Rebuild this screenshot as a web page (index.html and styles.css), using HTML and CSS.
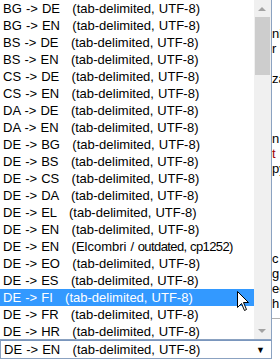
FILE: index.html
```html
<!DOCTYPE html>
<html lang="en">
<head>
    <meta charset="UTF-8">
    <meta name="viewport" content="width=device-width, initial-scale=1.0">
    <title>Dictionary download</title>
    <link rel="stylesheet" href="styles.css">
</head>
<body>
    <div class="page">
        <div class="page-text">
            <div class="line">ni</div>
            <div class="line">r</div>
            <div class="line"></div>
            <div class="line">za</div>
            <div class="line"></div>
            <div class="line"></div>
            <div class="line"></div>
            <div class="line">n</div>
            <div class="line"><span class="link">t</span></div>
            <div class="line">py</div>
            <div class="line"></div>
            <div class="line"></div>
            <div class="line"></div>
            <div class="line"></div>
            <div class="line"></div>
            <div class="line">c</div>
            <div class="line">g</div>
            <div class="line">ed</div>
            <div class="line">h</div>
            <div class="rule"></div>
        </div>
        <div class="select">
            <span class="select-text">DE -&gt; EN   (tab-delimited, UTF-8)</span>
            <span class="select-arrow">&#9660;</span>
        </div>
    </div>

    <div class="popup">
        <ul class="options">
            <li>BG -&gt; DE   (tab-delimited, UTF-8)</li>
            <li>BG -&gt; EN   (tab-delimited, UTF-8)</li>
            <li>BS -&gt; DE   (tab-delimited, UTF-8)</li>
            <li>BS -&gt; EN   (tab-delimited, UTF-8)</li>
            <li>CS -&gt; DE   (tab-delimited, UTF-8)</li>
            <li>CS -&gt; EN   (tab-delimited, UTF-8)</li>
            <li>DA -&gt; DE   (tab-delimited, UTF-8)</li>
            <li>DA -&gt; EN   (tab-delimited, UTF-8)</li>
            <li>DE -&gt; BG   (tab-delimited, UTF-8)</li>
            <li>DE -&gt; BS   (tab-delimited, UTF-8)</li>
            <li>DE -&gt; CS   (tab-delimited, UTF-8)</li>
            <li>DE -&gt; DA   (tab-delimited, UTF-8)</li>
            <li>DE -&gt; EL   (tab-delimited, UTF-8)</li>
            <li>DE -&gt; EN   (tab-delimited, UTF-8)</li>
            <li>DE -&gt; EN   (Elcombri /<span class="tight"> outdated, cp1252)</span></li>
            <li>DE -&gt; EO   (tab-delimited, UTF-8)</li>
            <li>DE -&gt; ES   (tab-delimited, UTF-8)</li>
            <li class="selected">DE -&gt; FI   (tab-delimited, UTF-8)</li>
            <li>DE -&gt; FR   (tab-delimited, UTF-8)</li>
            <li>DE -&gt; HR   (tab-delimited, UTF-8)</li>
        </ul>
        <div class="scrollbar">
            <div class="arrow-up"></div>
            <div class="thumb"></div>
            <div class="track"></div>
            <div class="arrow-down"></div>
        </div>
    </div>

    <svg class="cursor" width="13" height="21" viewBox="0 0 13 21">
        <path d="M0.5 0.5 L0.5 16.5 L4.5 12.5 L7.5 19.5 L9.5 18.5 L6.5 11.5 L11.5 11.5 Z" fill="#fff" stroke="#000" stroke-width="1"/>
    </svg>
</body>
</html>
```

FILE: styles.css
```css
body {
    margin: 0;
    width: 280px;
    height: 362px;
    overflow: hidden;
    background: #fff;
    font-family: "Liberation Sans", Arial, sans-serif;
    font-size: 13px;
    color: #000;
    position: relative;
}
.page {
    display: flex;
    flex-direction: column;
    height: 362px;
}
.page-text {
    height: 340px;
    padding: 26px 0 0 272px;
    box-sizing: border-box;
}
.line {
    height: 15px;
    line-height: 15px;
    white-space: pre;
}
.link {
    color: #a00000;
}
.rule {
    margin-top: 7px;
    border-top: 1px solid #b0b0b0;
}
.select {
    width: 272px;
    height: 19px;
    box-sizing: border-box;
    border: 1px solid #8ba2c1;
    border-top-color: #7a96bd;
    display: flex;
    align-items: center;
    justify-content: space-between;
    padding: 0 6px 0 3px;
}
.select-text {
    white-space: pre;
    word-spacing: 0.5px;
}
.select-arrow {
    font-size: 9px;
}
.popup {
    position: absolute;
    top: 0;
    left: 0;
    width: 272px;
    height: 340px;
    box-sizing: border-box;
    background: #fff;
    border-right: 1px solid #8ba2c1;
    border-bottom: 1px solid #8ba2c1;
    display: flex;
}
.options {
    list-style: none;
    margin: 0;
    padding: 0;
    flex: 1;
}
.options li {
    height: 17px;
    line-height: 17px;
    padding-left: 3px;
    white-space: pre;
    word-spacing: 0.5px;
}
.options li.selected {
    background: #3399ff;
    color: #fff;
}
.tight {
    letter-spacing: -0.6px;
}
.scrollbar {
    width: 17px;
    background: #f0f0f0;
    display: flex;
    flex-direction: column;
    align-items: center;
}
.arrow-up, .arrow-down {
    height: 17px;
    width: 17px;
    position: relative;
}
.arrow-up::after, .arrow-down::after {
    content: "";
    position: absolute;
    left: 4px;
    border-left: 4px solid transparent;
    border-right: 4px solid transparent;
}
.arrow-up::after {
    top: 7px;
    border-bottom: 4px solid #a3a3a3;
}
.arrow-down::after {
    top: 7px;
    border-top: 4px solid #a3a3a3;
}
.thumb {
    width: 15px;
    height: 58px;
    background: #cdcdcd;
}
.track {
    flex: 1;
}
.cursor {
    position: absolute;
    left: 237px;
    top: 291px;
}
```
